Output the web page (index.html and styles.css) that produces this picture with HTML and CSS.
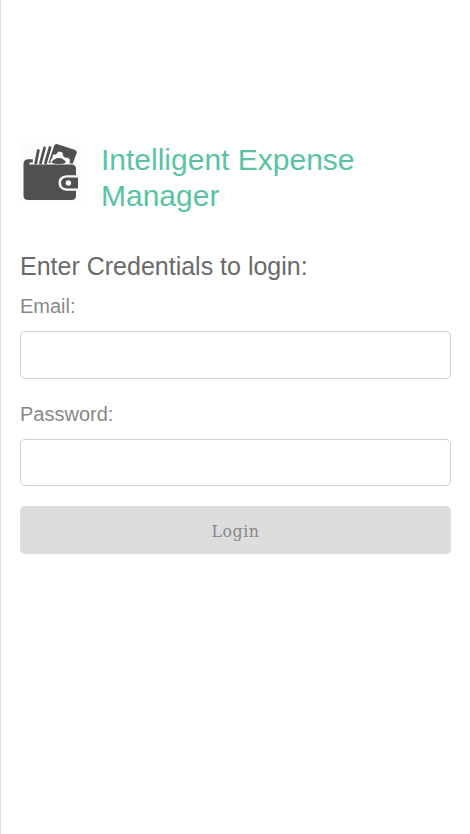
FILE: index.html
```html
<!DOCTYPE html>
<html lang="en">
<head>
<meta charset="utf-8">
<title>Intelligent Expense Manager</title>
<link rel="stylesheet" href="styles.css">
</head>
<body>
<main class="page">
  <header class="brand">
    <svg class="logo" viewBox="0 0 61 61" aria-hidden="true">
      <rect y="1" width="61" height="60" fill="#fcfcfc"/>
      <g fill="none" stroke="#505050" stroke-width="2.800" stroke-linecap="round">
        <path d="M15.800 21 18.300 8.500"/>
        <path d="M20.500 21 24.500 6"/>
        <path d="M25.500 21 30 5.500"/>
      </g>
      <path fill="#505050" d="M28.500 21 34 4Q35 1.500 37.500 2.200L54.500 7.800Q57.500 9 56.500 11.500L52.800 21.500H49.500L50 17.500 47.500 15.500 45.500 16 43 13.500 42.500 10.500 38.500 9.500 36 12.500 33 12.500 32.500 15.500 30.500 18.500 30.500 21Z"/>
      <path fill="#505050" d="M31.500 20.500Q34 16 39 16 43.500 16 46 20.500Q43.500 22 39 22 34 22 31.500 20.500Z"/>
      <path fill="#505050" d="M8.500 17.300H12.800V20.500H9.500V22.500H51.500Q56 22.500 56 27V53.500Q56 58 51.500 58H8Q3.500 58 3.500 53.500V22Q3.500 17.300 8.500 17.300Z"/>
      <path fill="#fcfcfc" d="M58.500 33.300H46.500Q38.500 34 38.500 41 38.500 48 46.500 48.700H58.500Z"/>
      <path fill="#505050" d="M57 35.500Q58 35.500 58 36.500V45.500Q58 46.500 57 46.500H46.500Q41 45.800 41 41 41 36.200 46.500 35.500Z"/>
      <circle cx="48.400" cy="41" r="2.700" fill="#fcfcfc"/>
    </svg>
    <h1 class="title">Intelligent Expense Manager</h1>
  </header>
  <form class="login">
    <h2 class="heading">Enter Credentials to login:</h2>
    <label class="label" for="email">Email:</label>
    <input class="field" id="email" type="email">
    <label class="label" for="password">Password:</label>
    <input class="field" id="password" type="password">
    <button class="submit" type="button">Login</button>
  </form>
</main>
</body>
</html>
```
FILE: styles.css
```css
* { box-sizing: border-box; }
body {
  margin: 0;
  background: #fff;
  font-family: "Liberation Sans", Arial, sans-serif;
}
.page {
  min-height: 834px;
  padding: 142px 19px 0;
  border-left: 1px solid #ddd;
}
.brand { display: flex; gap: 20px; }
.logo { flex: none; width: 61px; height: 61px; }
.title {
  margin: 0;
  color: #59c3a3;
  font-size: 30px;
  font-weight: 400;
  line-height: 36px;
}
.login { display: flex; flex-direction: column; margin-top: 37px; }
.heading {
  margin: 0;
  color: #6a6a6a;
  font-size: 25px;
  font-weight: 400;
  line-height: 30px;
}
.label {
  height: 50px;
  padding-top: 10px;
  color: #888;
  font-size: 20px;
  line-height: 30px;
}
.field {
  width: 431px;
  height: 48px;
  margin: 0 0 10px;
  padding: 8px 12px;
  border: 1px solid #cbd0d8;
  border-radius: 5px;
  background: #fff;
  font-size: 20px;
}
#password { height: 47px; margin-bottom: 20px; }
.submit {
  width: 431px;
  height: 48px;
  padding: 2px 0 0;
  border: 0;
  border-radius: 5px;
  background: #ddd;
  color: #888;
  font: 17.5px/46px "DejaVu Serif Condensed", "DejaVu Serif", serif;
  letter-spacing: 0.6px;
}
```
